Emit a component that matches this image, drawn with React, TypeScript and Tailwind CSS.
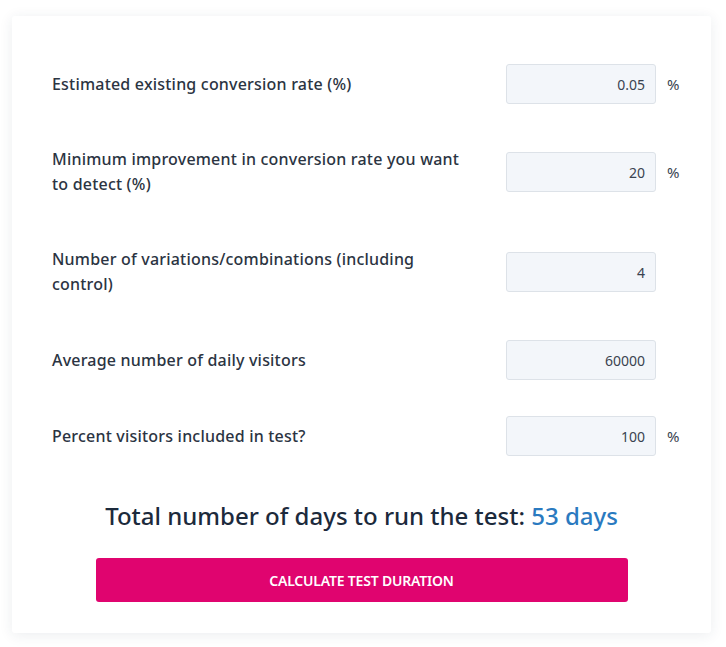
const rows = [
  { label: "Estimated existing conversion rate (%)", value: "0.05", unit: "%", mt: "mt-0" },
  { label: "Minimum improvement in conversion rate you want to detect (%)", value: "20", unit: "%", mt: "mt-[43px]" },
  { label: "Number of variations/combinations (including control)", value: "4", unit: "", mt: "mt-[50px]" },
  { label: "Average number of daily visitors", value: "60000", unit: "", mt: "mt-[43px]" },
  { label: "Percent visitors included in test?", value: "100", unit: "%", mt: "mt-[36px]" },
];

export default function App() {
  return (
    <div className="min-h-screen bg-white pt-[16px] pl-[12px] font-['Noto_Sans',sans-serif]">
      <div className="w-[699px] h-[617px] bg-white rounded-[3px] shadow-[0_2px_14px_rgba(30,50,80,0.09)] pt-[48px] pl-[40px] pr-[55px]">
        {rows.map((r) => (
          <div key={r.label} className={`${r.mt} flex items-center`}>
            <div className="w-[416px] text-[16px] font-medium leading-[25px] tracking-[0.2px] text-[#2b3442]">
              {r.label}
            </div>
            <div className="w-[150px] h-[40px] ml-auto flex items-center justify-end px-[10px] bg-[#f3f6fa] border border-[#dde2e8] rounded-[3px] text-[14px] text-[#3a4350] relative">
              {r.value}
              {r.unit && (
                <span className="absolute left-[160px] text-[15px] text-[#3a4350]">{r.unit}</span>
              )}
            </div>
          </div>
        ))}
        <div className="mt-[44px] -mr-[15px] text-center text-[24px] leading-[32px] font-medium text-[#1c2a3c]">
          Total number of days to run the test: <span className="text-[#2a7ac0]">53 days</span>
        </div>
        <div className="-mr-[15px]">
          <button className="mt-[26px] mx-auto block w-[532px] h-[44px] rounded-[3px] bg-[#e0046f] text-white text-[14px] font-semibold tracking-[-0.2px]">
            CALCULATE TEST DURATION
          </button>
        </div>
      </div>
    </div>
  );
}
